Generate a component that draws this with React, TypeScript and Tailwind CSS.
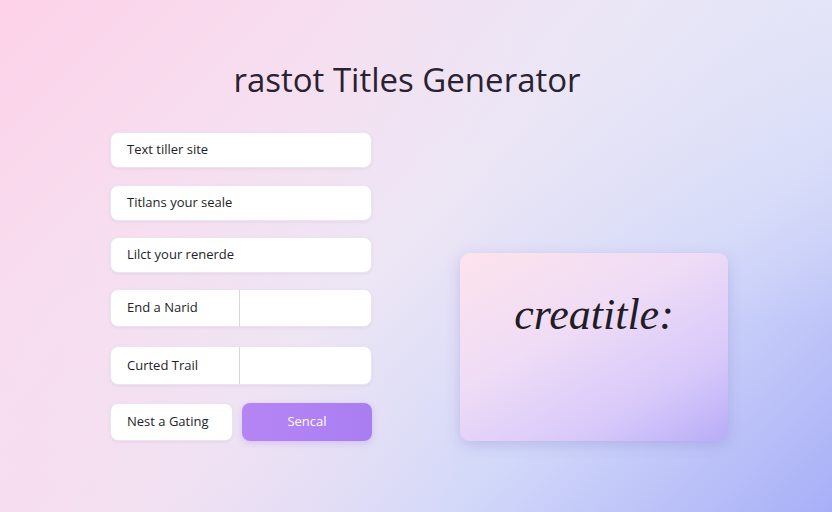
import React from 'react';

const inputBox =
  'flex items-center bg-white rounded-lg border border-[#ebe3ee] shadow-[0_1px_3px_rgba(150,120,170,0.12)] text-[13px] text-[#231e28]';

const SplitField = ({ label, className }: { label: string; className: string }) => (
  <div className={`${inputBox} ${className} overflow-hidden`}>
    <div className="w-[129px] h-full flex items-center pl-4 border-r border-[#ddd6e0]">{label}</div>
    <div className="flex-1 h-full" />
  </div>
);

const App = () => {
  return (
    <div
      className="relative w-full h-[512px] overflow-hidden bg-[linear-gradient(135deg,#fdd2e9_0%,#f6dff0_28%,#ede6f5_48%,#d2d8f9_72%,#a8aff7_100%)]"
      style={{ fontFamily: '"Open Sans", "Noto Sans", sans-serif' }}
    >
      <div className="absolute inset-0 bg-[radial-gradient(ellipse_at_100%_0%,rgba(230,231,248,0.7),transparent_45%)] pointer-events-none" />
      <div className="absolute inset-0 bg-[radial-gradient(ellipse_at_0%_100%,rgba(250,218,238,0.6),transparent_40%)] pointer-events-none" />
      <div className="relative flex flex-col">
        <h1 className="mt-[59px] h-[42px] pr-[18px] text-center text-[33px] leading-[42px] font-medium text-[#2a2230]">
          rastot Titles Generator
        </h1>

        <div className="mt-[31px] ml-[110px] flex items-end gap-[88px]">
          {/* form column */}
          <div className="w-[262px] flex flex-col">
            <div className={`${inputBox} h-[36px] pl-4`}>Text tiller site</div>
            <div className={`${inputBox} h-[36px] pl-4 mt-[17px]`}>Titlans your seale</div>
            <div className={`${inputBox} h-[36px] pl-4 mt-[16px]`}>Lilct your renerde</div>
            <SplitField label="End a Narid" className="h-[38px] mt-[16px]" />
            <SplitField label="Curted Trail" className="h-[39px] mt-[19px]" />
            <div className="flex gap-[9px] mt-[18px] h-[38px]">
              <div className={`${inputBox} w-[123px] pl-4`}>Nest a Gating</div>
              <button className="flex-1 rounded-lg bg-[linear-gradient(90deg,#b685f4,#a97ef2)] text-[13px] text-white shadow-[0_2px_6px_rgba(150,100,230,0.25)]">
                Sencal
              </button>
            </div>
          </div>

          {/* preview card */}
          <div className="w-[268px] h-[188px] rounded-[10px] bg-[linear-gradient(150deg,#fde3ec_0%,#efdcf6_40%,#d7c8fa_75%,#b7adf8_100%)] shadow-[0_4px_14px_rgba(120,110,190,0.28)] flex justify-center pt-[35px]">
            <span
              className="italic text-[44px] leading-[54px] text-[#231c26]"
              style={{ fontFamily: '"Liberation Serif", "DejaVu Serif", serif' }}
            >
              creatitle:
            </span>
          </div>
        </div>
      </div>
    </div>
  );
};

export default App;
